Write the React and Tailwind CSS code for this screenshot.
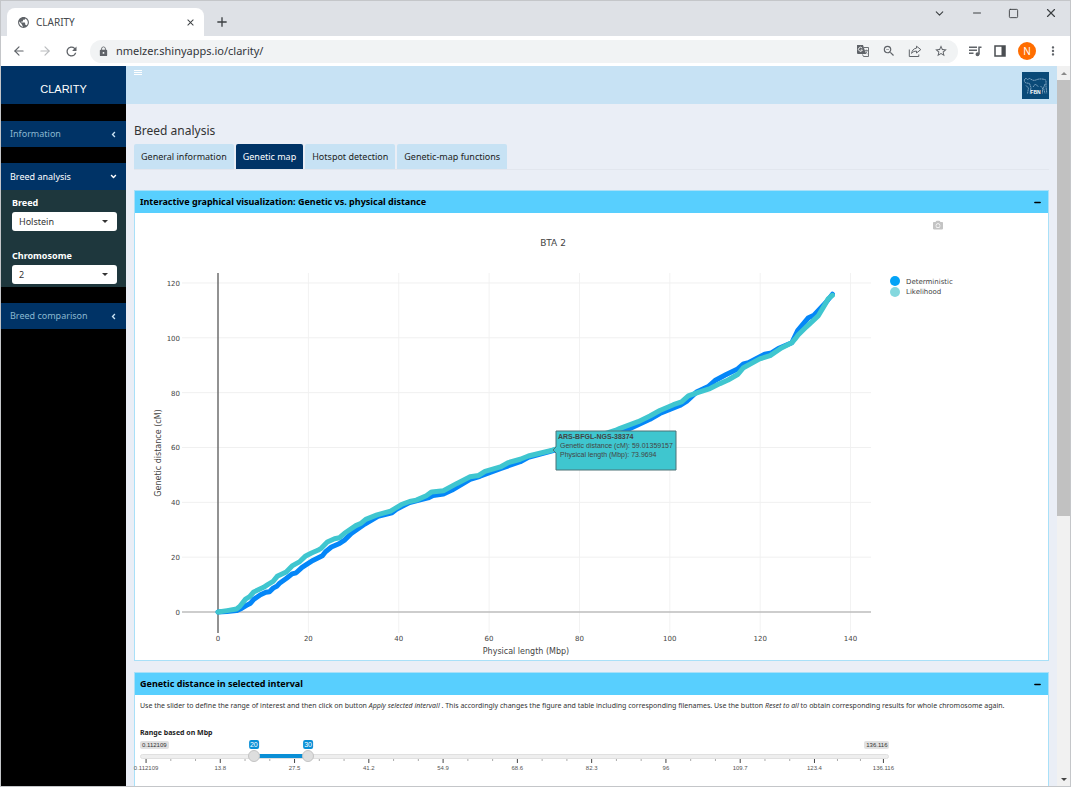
// App.jsx
import React, { useState } from 'react';
import { ChevronDown, Minus, Square, X, ArrowLeft, ArrowRight } from 'lucide-react';
import {
  MdPublic,
  MdClose,
  MdAdd,
  MdRefresh,
  MdLock,
  MdZoomOut,
  MdStarBorder,
  MdMoreVert,
} from 'react-icons/md';
import { FaAngleLeft, FaAngleDown, FaCamera } from 'react-icons/fa';

const TABS = ['General information', 'Genetic map', 'Hotspot detection', 'Genetic-map functions'];

// [physical length (Mbp), genetic distance (cM)]
const DETERMINISTIC = [
  [0, 0], [2, 0.2], [4.1, 0.5], [5.2, 1.3], [6.3, 2.4], [7.2, 3.2], [7.9, 4.6], [9.4, 6.3], [10.6, 7.2],
  [11.4, 7.4], [12.2, 8.7], [13.1, 9.5], [13.7, 10.6], [15.1, 12.2], [16.4, 13.9], [17.3, 14.3], [18.6, 16.3],
  [21, 18.8], [23.1, 20.5], [23.8, 22], [25.1, 23.7], [26.9, 25], [28, 26.2], [29.5, 28.6], [32.5, 32.1],
  [35.4, 34.9], [38.5, 36.2], [39.5, 37.5], [42.4, 39.9], [46.5, 41.6], [47.6, 42.5], [49.9, 43], [51.8, 44.5],
  [55.8, 48.4], [58, 49.5], [62.5, 52.3], [66.9, 54.8], [68.7, 56.4], [74, 58.8], [80, 61.5], [86, 64.2],
  [90.5, 66.4], [95.6, 70.3], [97.8, 72.4], [102.2, 75.3], [103.7, 76.8], [105.9, 80.2], [108.5, 82.2],
  [110, 84.4], [112.6, 86.7], [114.9, 88.5], [116.3, 90.5], [117.4, 90.9], [121, 94], [122.5, 94.5],
  [124, 96.1], [127, 98.2], [128.3, 102.6], [130.6, 107.2], [131.9, 108.2], [134.5, 112.8], [136, 115.9],
];

const LIKELIHOOD = [
  [0, 0], [2, 0.5], [4.1, 1.1], [4.8, 2], [6.1, 4.7], [7, 5.6], [7.9, 7.3], [10.1, 9], [11, 10], [12.2, 11.2],
  [13.1, 13], [15.1, 14.6], [16.4, 16.8], [18.1, 18.4], [19.3, 20.3], [20.7, 21.5], [22.1, 22.5], [22.9, 23.3],
  [24.2, 25.5], [25.8, 26.7], [26.9, 27.1], [28, 28.7], [30.5, 31.5], [31.7, 32.4], [32.7, 33.8], [35.2, 35.4],
  [38.2, 36.8], [40.6, 39.2], [42.4, 40.3], [43.9, 40.8], [46.1, 42.4], [47.3, 43.8], [49.9, 44.2],
  [52.9, 46.9], [55.8, 49.3], [57.7, 49.8], [59.1, 51.3], [62.5, 52.9], [64.3, 54.5], [66.9, 55.7],
  [68.7, 56.9], [74, 59], [80, 62], [87.9, 66.2], [89, 67], [93, 69.4], [95.6, 71.5], [97.8, 73.5],
  [100.8, 75.6], [102.6, 76.6], [104.1, 78.8], [106.3, 80.1], [108.9, 81.5], [111.1, 83.3], [112.9, 84.6],
  [115.1, 86.7], [116.3, 89.1], [119.9, 92.3], [122.2, 93.5], [124.7, 96.3], [127, 98.2], [127.7, 99.5],
  [128.4, 101], [130.3, 104.1], [132.9, 108.1], [134.3, 112], [135.1, 114.3], [136, 115.5],
];

const X_TICKS = [0, 20, 40, 60, 80, 100, 120, 140];
const Y_TICKS = [0, 20, 40, 60, 80, 100, 120];

// plot scales
const sx = (v) => 83 + v * 4.518;
const sy = (v) => 399 - v * 2.742;
const toPoints = (rows) => rows.map(([x, y]) => `${sx(x)},${sy(y)}`).join(' ');

const RANGE_MIN = 0.112109;
const RANGE_MAX = 136.116;
const RANGE_TICKS = [0.112109, 13.8, 27.5, 41.2, 54.9, 68.6, 82.3, 96, 109.7, 123.4, 136.116];
const ratio = (v) => (v - RANGE_MIN) / (RANGE_MAX - RANGE_MIN);

function TranslateIcon() {
  return (
    <svg viewBox="0 0 14 14" className="w-[14px] h-[14px]" aria-hidden="true">
      <path d="M1 1h6l3 9H2a1 1 0 0 1-1-1z" fill="#5f6368" />
      <path d="M6.2 4.2A2 2 0 1 0 6.4 6H4.7" fill="none" stroke="#fff" strokeWidth="0.9" />
      <path d="M8 3.5h4.5v9H7.5L6.5 10.5" fill="none" stroke="#5f6368" strokeWidth="0.9" />
      <path d="M8.8 6.5h3M10.3 5.6v.9M11.3 6.5c-.3 1.6-1.2 2.6-2.2 3.3M9.3 7.5c.5 1 1.2 1.8 2.2 2.3" fill="none" stroke="#5f6368" strokeWidth="0.7" />
    </svg>
  );
}

function ShareIcon() {
  return (
    <svg viewBox="0 0 14 14" className="w-[14px] h-[14px]" fill="none" stroke="#5f6368" strokeLinejoin="round" aria-hidden="true">
      <path d="M8.5 2.2 12.8 5.6 8.5 9V7.1C6.3 7.1 4.8 7.8 3.6 9.4 4 6.6 5.6 4.5 8.5 4.1z" />
      <path d="M1.3 5.5v7h9.5v-2" />
    </svg>
  );
}

function MusicIcon() {
  return (
    <svg viewBox="0 0 14 14" className="w-[14px] h-[14px]" fill="none" stroke="#5f6368" strokeWidth="1.5" aria-hidden="true">
      <path d="M1 3.2h8M1 6.2h8M1 9.2h4.5M11 10.5V3.2h2.5" />
      <circle cx="9.5" cy="10.3" r="1.2" fill="#5f6368" />
    </svg>
  );
}

function SidePanelIcon() {
  return (
    <svg viewBox="0 0 12 12" className="w-[12px] h-[12px]" aria-hidden="true">
      <rect x="1" y="1" width="10" height="10" fill="none" stroke="#4a4d51" strokeWidth="1.5" />
      <rect x="7.5" y="1" width="3.5" height="10" fill="#4a4d51" />
    </svg>
  );
}

function FbnLogo() {
  return (
    <svg viewBox="0 0 27 27" className="w-[27px] h-[27px]" role="img" aria-label="FBN">
      <rect width="27" height="27" fill="#0a4a78" />
      <g fill="none" stroke="#a9c6dc" strokeWidth="0.7" strokeDasharray="2 0.4">
        <path d="M2.5 7.5 4 6.2l1.5 1.3 2-1 3.5 1.8c3 .4 4-1.2 6-1.2 2-.4 6 0 7 1.2v6l.8 7" />
        <path d="M2.5 7.5c-.4 2 .2 3 1.8 3.5l3 .4M4 13.500l2.500 2.500-1 5.500M7.5 11.500l1.500 4-1 6M18.500 14l2 2v5.500M23 12l-1.500 4 1.500 5.500M11 15l2.500-3 3 3" />
      </g>
      <text x="13.5" y="22" textAnchor="middle" fill="#fff" className="font-['Liberation_Sans'] text-[5px] font-bold">FBN</text>
    </svg>
  );
}

function BrowserBar() {
  return (
    <header className="shrink-0">
      <div className="flex h-[35px] items-end justify-between bg-[#dee1e6] pl-[6px]">
        <div className="flex items-center">
          <div className="flex h-[28px] w-[197px] items-center rounded-t-lg bg-white pl-[10px] pr-[8px]">
            <MdPublic className="size-[13px] text-[#5f6368]" />
            <span className="ml-[6px] flex-1 text-[10px] text-[#45494d]">CLARITY</span>
            <button aria-label="Close tab"><MdClose className="size-[11px] text-[#3c4043]" /></button>
          </div>
          <button aria-label="New tab" className="ml-[10px]"><MdAdd className="size-[16px] text-[#3c4043]" /></button>
        </div>
        <div className="flex items-center gap-[25px] self-start pt-[5px] pr-[12px] text-[#3c4043]">
          <button aria-label="Search tabs"><ChevronDown className="size-[13px]" strokeWidth={2} /></button>
          <button aria-label="Minimize"><Minus className="size-[12px]" strokeWidth={2} /></button>
          <button aria-label="Maximize"><Square className="size-[11px]" strokeWidth={2} /></button>
          <button aria-label="Close"><X className="size-[14px]" strokeWidth={2} /></button>
        </div>
      </div>
      <div className="flex h-[30px] items-center bg-white pl-[11px] pr-[10px] text-[#5f6368]">
        <button aria-label="Back"><ArrowLeft className="size-[14px]" /></button>
        <button aria-label="Forward" className="ml-[12px]"><ArrowRight className="size-[14px] text-[#b9bbbe]" /></button>
        <button aria-label="Reload" className="ml-[12px]"><MdRefresh className="size-[15px]" /></button>
        <div className="ml-[11px] flex h-[23px] flex-1 items-center rounded-full bg-[#f1f3f4] pl-[8px] pr-[10px]">
          <MdLock className="size-[11px]" />
          <input
            aria-label="Address"
            defaultValue="nmelzer.shinyapps.io/clarity/"
            className="ml-[7px] min-w-0 flex-1 bg-transparent text-[11px] text-[#33363a] outline-none"
          />
          <div className="flex items-center gap-[12px]">
            <button aria-label="Translate"><TranslateIcon /></button>
            <button aria-label="Zoom out"><MdZoomOut className="size-[14px]" /></button>
            <button aria-label="Share"><ShareIcon /></button>
            <button aria-label="Bookmark"><MdStarBorder className="size-[14px]" /></button>
          </div>
        </div>
        <div className="ml-[10px] flex items-center gap-[12px]">
          <button aria-label="Media"><MusicIcon /></button>
          <button aria-label="Side panel"><SidePanelIcon /></button>
          <button className="size-[18px] rounded-full bg-[#ff6d00] text-[10px] text-white">N</button>
        </div>
        <button aria-label="Menu" className="ml-[10px]"><MdMoreVert className="size-[14px]" /></button>
      </div>
    </header>
  );
}

function MenuItem({ label, open }) {
  return (
    <a
      href="#"
      className={`flex items-center justify-between bg-[#003366] pl-[9px] pr-[8px] text-[9px] ${
        open ? 'h-[27px] text-white' : 'h-[26px] text-[#8ab8d0]'
      }`}
    >
      {label}
      {open ? <FaAngleDown className="size-[9px] text-white" /> : <FaAngleLeft className="size-[9px] text-[#c8e2f4]" />}
    </a>
  );
}

function SelectField({ id, label, options, value, onChange }) {
  return (
    <div className="pl-[11px] pr-[9px]">
      <label htmlFor={id} className="block text-[9px] leading-[16px] font-bold text-white">{label}</label>
      <div className="relative mt-px">
        <select
          id={id}
          value={value}
          onChange={(e) => onChange(e.target.value)}
          className="block h-[19px] w-full appearance-none rounded-[3px] bg-white pl-[7px] text-[9px] text-[#333]"
        >
          {options.map((o) => <option key={o}>{o}</option>)}
        </select>
        <span className="pointer-events-none absolute top-[8px] right-[9px] border-x-[3px] border-t-[3px] border-x-transparent border-t-[#333]" />
      </div>
    </div>
  );
}

function Sidebar() {
  const [breed, setBreed] = useState('Holstein');
  const [chromosome, setChromosome] = useState('2');

  return (
    <aside className="w-[125px] shrink-0 bg-black">
      <div className="flex h-[38px] items-center justify-center bg-[#003366] pt-[8px] font-['Liberation_Sans',sans-serif] text-[11px] text-white">
        CLARITY
      </div>
      <nav className="mt-[17px] flex flex-col gap-[16px]">
        <MenuItem label="Information" />
        <div>
          <MenuItem label="Breed analysis" open />
          <div className="flex flex-col gap-[17px] bg-[#1e373d] pt-[5px] pb-[3px]">
            <SelectField
              id="breed"
              label="Breed"
              value={breed}
              onChange={setBreed}
              options={['Holstein', 'Simmental', 'Angus']}
            />
            <SelectField
              id="chromosome"
              label="Chromosome"
              value={chromosome}
              onChange={setChromosome}
              options={['1', '2', '3', '4', '5']}
            />
          </div>
        </div>
        <MenuItem label="Breed comparison" />
      </nav>
    </aside>
  );
}

function Box({ title, children }) {
  return (
    <section className="border border-[#a9e0f8] bg-white">
      <div className="flex h-[22px] items-center justify-between bg-[#58cffe] pl-[5px] pr-[6px]">
        <h3 className="text-[9px] font-bold text-black">{title}</h3>
        <button aria-label={`Collapse ${title}`}><Minus className="size-[9px] text-black" strokeWidth={4} /></button>
      </div>
      {children}
    </section>
  );
}

function DistanceChart() {
  return (
    <svg viewBox="0 0 913 447" className="block w-full font-['DejaVu_Sans',sans-serif]" fill="#444">
      <text x="418" y="33" textAnchor="middle" className="text-[9px]">BTA 2</text>
      <FaCamera x="798" y="7" size="10" color="#c4c4c4" />

      {/* grid */}
      {X_TICKS.slice(1).map((t) => <path key={t} d={`M${sx(t)} 60V420`} stroke="#f2f2f2" />)}
      {Y_TICKS.slice(1).map((t) => <path key={t} d={`M47 ${sy(t)}H736`} stroke="#f0f0f0" />)}
      <path d="M47 399H736" stroke="#bdbdbd" strokeWidth="1.5" />
      <path d="M83 60V420" stroke="#6e6e6e" strokeWidth="1.5" />

      {X_TICKS.map((t) => (
        <text key={t} x={sx(t)} y="428" textAnchor="middle" className="text-[7px]">{t}</text>
      ))}
      {Y_TICKS.map((t) => (
        <text key={t} x="45" y={sy(t) + 3} textAnchor="end" className="text-[7px]">{t}</text>
      ))}
      <text x="391" y="441" textAnchor="middle" className="text-[8px]">Physical length (Mbp)</text>
      <text transform="translate(26 240) rotate(-90)" textAnchor="middle" className="text-[8px]">Genetic distance (cM)</text>

      {/* curves */}
      <g fill="none" strokeWidth="5" strokeLinecap="round" strokeLinejoin="round">
        <polyline points={toPoints(DETERMINISTIC)} stroke="#0486f8" />
        <polyline points={toPoints(LIKELIHOOD)} stroke="#3fc6cf" />
      </g>

      {/* legend */}
      <circle cx="760" cy="68" r="5" fill="#03a3f7" />
      <circle cx="760" cy="79" r="5" fill="#84d8de" />
      <text x="771" y="71" className="text-[7px]">Deterministic</text>
      <text x="771" y="81" className="text-[7px]">Likelihood</text>

      {/* hover label */}
      <g className="font-['Liberation_Sans',sans-serif]">
        <path d="M421 218H541V257H421V240L418 237L421 234z" fill="#3fc6cf" stroke="#4c7276" />
        <text x="423" y="226" className="text-[7px] font-bold">ARS-BFGL-NGS-38374</text>
        <text x="425" y="235" className="text-[7px]">Genetic distance (cM): 59.01359157</text>
        <text x="425" y="244" className="text-[7px]">Physical length (Mbp): 73.9694</text>
      </g>
    </svg>
  );
}

function RangeThumb({ label, value, onChange }) {
  return (
    <input
      type="range"
      aria-label={label}
      min={RANGE_MIN}
      max={RANGE_MAX}
      step="any"
      value={value}
      onChange={(e) => onChange(Number(e.target.value))}
      className="pointer-events-none absolute inset-0 h-[12px] w-full appearance-none bg-transparent [&::-webkit-slider-thumb]:pointer-events-auto [&::-webkit-slider-thumb]:size-[12px] [&::-webkit-slider-thumb]:appearance-none [&::-webkit-slider-thumb]:rounded-full [&::-webkit-slider-thumb]:border [&::-webkit-slider-thumb]:border-[#c4c4c4] [&::-webkit-slider-thumb]:bg-[#dedede]"
    />
  );
}

function RangeSlider() {
  const [from, setFrom] = useState(20);
  const [to, setTo] = useState(30);

  return (
    <div className="w-[83%] font-['Liberation_Sans',sans-serif] text-[#333]">
      <div className="flex h-[10px] items-center justify-between text-[6px] leading-[8px]">
        <span className="rounded-[2px] bg-[#e1e1e1] px-[2px]">{RANGE_MIN}</span>
        <span className="rounded-[2px] bg-[#e1e1e1] px-[2px]">{RANGE_MAX}</span>
      </div>
      <div className="relative flex h-[12px] items-center">
        <div className="h-[5px] w-full rounded-full border border-[#e0e0e0] bg-[#eee]" />
        <div className="absolute inset-x-[6px] top-0 h-full">
          <div
            className="absolute top-[4px] h-[4px] bg-[#0a8fd6]"
            style={{ left: `${ratio(from) * 100}%`, width: `${(ratio(to) - ratio(from)) * 100}%` }}
          />
          {[from, to].map((v, i) => (
            <span
              key={i}
              className="absolute bottom-[13px] -translate-x-1/2 rounded-[2px] bg-[#0a8fd6] px-[1px] text-[7px] leading-[9px] text-white"
              style={{ left: `${ratio(v) * 100}%` }}
            >
              {Math.round(v)}
            </span>
          ))}
        </div>
        <RangeThumb label="Range from" value={from} onChange={setFrom} />
        <RangeThumb label="Range to" value={to} onChange={setTo} />
      </div>
      <svg viewBox="0 0 750 18" className="-mt-[4px] block w-full overflow-visible" fill="#555">
        {RANGE_TICKS.map((t, i) => {
          const x = 6 + ratio(t) * 738;
          const step = i < RANGE_TICKS.length - 1 ? (ratio(RANGE_TICKS[i + 1]) - ratio(t)) * 246 : 0;
          return (
            <g key={t}>
              <path d={`M${x} 1v4`} stroke="#444" />
              {step > 0 && <path d={`M${x + step} 1v2M${x + 2 * step} 1v2`} stroke="#aaa" />}
              <text x={x} y="12" textAnchor="middle" className="text-[6px]">{t}</text>
            </g>
          );
        })}
      </svg>
    </div>
  );
}

function Content() {
  const [activeTab, setActiveTab] = useState('Genetic map');

  return (
    <main className="min-w-0 flex-1 overflow-hidden bg-[#eaeef6]">
      <div className="flex h-[38px] items-start justify-between bg-[#c7e2f4] pr-[8px]">
        <button aria-label="Toggle sidebar" className="flex flex-col gap-px pt-[4px] pl-[8px]">
          <span className="h-px w-[8px] bg-white" />
          <span className="h-px w-[8px] bg-white" />
          <span className="h-px w-[8px] bg-white" />
        </button>
        <div className="pt-[6px]"><FbnLogo /></div>
      </div>

      <div className="px-[8px] pt-[19px]">
        <h2 className="text-[12px] leading-[16px] text-[#333]">Breed analysis</h2>
        <div role="tablist" className="mt-[5px] flex gap-[2px] border-b border-[#e2e6ee]">
          {TABS.map((tab) => (
            <button
              key={tab}
              role="tab"
              aria-selected={tab === activeTab}
              onClick={() => setActiveTab(tab)}
              className={`h-[25px] rounded-t-[2px] px-[7px] text-[9px] ${
                tab === activeTab ? 'bg-[#003366] text-white' : 'bg-[#c7e2f4] text-[#222]'
              }`}
            >
              {tab}
            </button>
          ))}
        </div>

        <div className="mt-[20px] flex flex-col gap-[11px]">
          <Box title="Interactive graphical visualization: Genetic vs. physical distance">
            <DistanceChart />
          </Box>

          <Box title="Genetic distance in selected interval">
            <div className="h-[140px] px-[5px] pt-[5px]">
              <p className="text-[7px] leading-[12px] text-[#333]">
                Use the slider to define the range of interest and then click on button <i>Apply selected intervall</i> . This
                accordingly changes the figure and table including corresponding filenames. Use the button <i>Reset to all</i> to
                obtain corresponding results for whole chromosome again.
              </p>
              <p className="mt-[15px] mb-px text-[7px] leading-[12px] font-bold text-[#222]">Range based on Mbp</p>
              <RangeSlider />
            </div>
          </Box>
        </div>
      </div>
    </main>
  );
}

function Scrollbar() {
  return (
    <div className="flex w-[13px] shrink-0 flex-col items-center bg-[#f1f1f1]" aria-hidden="true">
      <div className="flex h-[14px] items-center">
        <span className="border-x-[3px] border-b-[3px] border-x-transparent border-b-[#8a8a8a]" />
      </div>
      <div className="flex w-full flex-1 flex-col">
        <div className="h-[63%] w-full bg-[#c1c1c1]" />
      </div>
      <div className="flex h-[14px] items-center">
        <span className="border-x-[3px] border-t-[3px] border-x-transparent border-t-[#444]" />
      </div>
    </div>
  );
}

export default function App() {
  return (
    <div className="flex h-screen flex-col bg-white pr-px pb-px font-['Noto_Sans',sans-serif]">
      <div className="flex min-h-0 flex-1 flex-col border border-[#c4c6c9]">
        <BrowserBar />
        <div className="flex min-h-0 flex-1">
          <Sidebar />
          <Content />
          <Scrollbar />
        </div>
      </div>
    </div>
  );
}
